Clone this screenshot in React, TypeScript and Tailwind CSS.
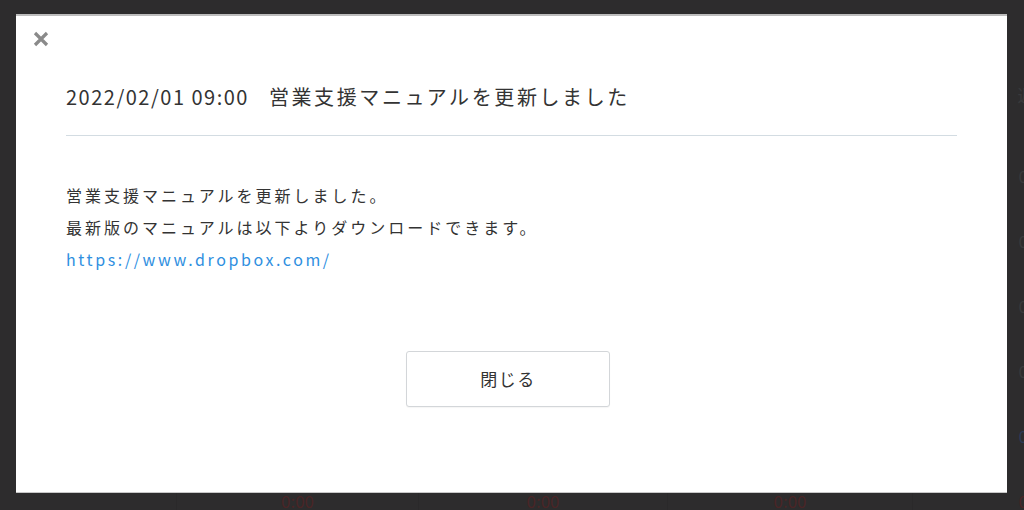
import React from "react";

const cols = ["", "", "", "", ""];
const rows = [
  { y: "0:00", tone: "text-[#3a3a3b]" },
  { y: "0:00", tone: "text-[#3a3a3b]" },
  { y: "0:00", tone: "text-[#3a3a3b]" },
  { y: "0:00", tone: "text-[#3a3a3b]" },
  { y: "0:00", tone: "text-[#2c3a55]" },
  { y: "0:00", tone: "text-[#4a2526]" },
];

const font = { fontFamily: '"Noto Sans CJK JP", "Noto Sans", sans-serif' };

const Background: React.FC = () => (
  <div className="w-[1160px] h-full bg-[#2d2c2d]">
    <div className="grid grid-cols-[176px_242px_249px_245px_245px] h-[143px] items-end pb-[36px]">
      {cols.map((_, i) => (
        <div key={i} className="text-center text-[17px] text-[#3a3a3b]">
          {i === 4 ? "週計" : ""}
        </div>
      ))}
    </div>
    {rows.map((r, ri) => (
      <div key={ri} className="grid grid-cols-[176px_242px_249px_245px_245px] h-[65px]">
        {cols.map((_, ci) => (
          <div
            key={ci}
            className={`flex items-center justify-center text-[17px] ${ci > 0 ? "border-l border-[#2a292a]" : ""} ${r.tone}`}
          >
            {ci > 0 ? r.y : ""}
          </div>
        ))}
      </div>
    ))}
  </div>
);

export default function App() {
  return (
    <div className="relative w-[1024px] h-[510px] overflow-hidden bg-[#2d2c2d]" style={font}>
      <Background />

      {/* Modal */}
      <div className="absolute left-[16px] top-[14px] w-[991px] h-[478px] bg-white border-t-2 border-[#bdbdbd] shadow-[0_1px_0_#c8c8c8] flex flex-col">
        <button className="absolute left-[15px] top-[13px] w-[20px] h-[20px] flex items-center justify-center text-[#8a8a8a]">
          <svg width="16" height="16" viewBox="0 0 16 16">
            <path d="M2 2 L14 14 M14 2 L2 14" stroke="currentColor" strokeWidth="3.2" strokeLinecap="butt" />
          </svg>
        </button>

        <div className="mx-[50px] mt-[66px] pb-[23px] border-b border-[#d3dce2] flex items-center text-[#333333] text-[20px] leading-[30px]">
          <span className="tracking-[1.5px]">2022/02/01 09:00</span>
          <span className="ml-[20px] tracking-[2.6px]">営業支援マニュアルを更新しました</span>
        </div>

        <div className="mx-[50px] mt-[43px] text-[16px] leading-[32px] tracking-[3px] text-[#333333]">
          <p>営業支援マニュアルを更新しました。</p>
          <p>最新版のマニュアルは以下よりダウンロードできます。</p>
          <a href="#" className="tracking-[2.6px] text-[#2f8fdf]">https://www.dropbox.com/</a>
        </div>

        <div className="flex justify-center mt-[76px] pr-[7px]">
          <button className="w-[204px] h-[56px] border border-[#d3d6d9] rounded-[3px] bg-white text-[17px] tracking-[1.5px] text-[#333333] shadow-[0_1px_1px_rgba(0,0,0,0.04)]">
            閉じる
          </button>
        </div>
      </div>
    </div>
  );
}
